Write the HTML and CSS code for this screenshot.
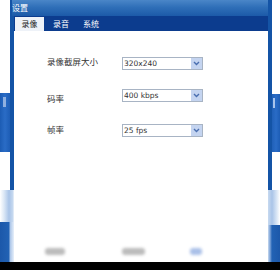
FILE: index.html
```html
<!DOCTYPE html>
<html>
<head>
<meta charset="utf-8">
<link rel="stylesheet" href="styles.css">
</head>
<body>
<div class="screen">
  <div class="main">
    <div class="gutter left">
      <div class="g-top"></div>
      <div class="g-block"><span class="notch"></span></div>
      <div class="g-mid"></div>
      <div class="g-fade"></div>
      <div class="g-dark"></div>
    </div>
    <div class="window">
      <div class="titlebar">设置</div>
      <div class="tabbar">
        <div class="tab active">录像</div>
        <div class="tab">录音</div>
        <div class="tab">系统</div>
      </div>
      <div class="content">
        <div class="rows">
          <div class="row r1">
            <div class="label">录像截屏大小</div>
            <div class="select"><span class="val">320x240</span><span class="arrow"><svg width="7" height="5" viewBox="0 0 7 5"><path d="M1 1 L3.5 3.5 L6 1" fill="none" stroke="#4a6fb0" stroke-width="1.4"/></svg></span></div>
          </div>
          <div class="row r2">
            <div class="label">码率</div>
            <div class="select"><span class="val">400 kbps</span><span class="arrow"><svg width="7" height="5" viewBox="0 0 7 5"><path d="M1 1 L3.5 3.5 L6 1" fill="none" stroke="#4a6fb0" stroke-width="1.4"/></svg></span></div>
          </div>
          <div class="row r3">
            <div class="label">帧率</div>
            <div class="select"><span class="val">25 fps</span><span class="arrow"><svg width="7" height="5" viewBox="0 0 7 5"><path d="M1 1 L3.5 3.5 L6 1" fill="none" stroke="#4a6fb0" stroke-width="1.4"/></svg></span></div>
          </div>
        </div>
        <div class="buttons">
          <div class="blob gray b1"></div>
          <div class="blob gray b2"></div>
          <div class="blob blue b3"></div>
        </div>
      </div>
    </div>
    <div class="gutter right">
      <div class="g-top"></div>
      <div class="g-block"><span class="notch"></span></div>
      <div class="g-mid"></div>
      <div class="g-fade"></div>
      <div class="g-dark"></div>
    </div>
  </div>
  <div class="bottombar"></div>
</div>
</body>
</html>
```

FILE: styles.css
```css
* { box-sizing: border-box; }
html, body { margin: 0; padding: 0; background: #fff; }
body { font-family: "Noto Sans CJK SC", "Liberation Sans", sans-serif; }

.screen { width: 280px; height: 270px; display: flex; flex-direction: column; overflow: hidden; }
.main { flex: 1; display: flex; }
.bottombar { height: 8px; background: #000; }

.gutter { display: flex; flex-direction: column; }
.gutter.left { width: 14px; }
.gutter.right { width: 12px; }

.left .g-top { height: 93px; background: linear-gradient(90deg, #fff 10px, #1454a6 10px); }
.left .g-block { height: 59px; background: linear-gradient(90deg, #1c5cb4 0, #2a6cc6 5px, #1d5db6 10px, #1454a6 10px); position: relative; }
.left .notch { position: absolute; left: 3px; top: 4px; width: 3px; height: 10px; background: #8fb0e0; }
.left .g-mid { height: 38px; background: linear-gradient(90deg, #fff 10px, #1454a6 10px); }
.left .g-fade { height: 32px; background: linear-gradient(90deg, #fff 0, #dce8f6 4px, #a9c4e8 9px, #c8daf0 13px, #f4f8fc 14px); }
.left .g-dark { flex: 1; background: linear-gradient(90deg, #1c58aa 0, #2262b4 9px, #a9c4e8 10px, #e8f0fa 14px); }

.right .g-top { height: 94px; background: linear-gradient(90deg, #1454a6 4px, #fff 4px); }
.right .g-block { height: 58px; background: linear-gradient(90deg, #1454a6 4px, #2060b8 4px, #2a6cc6 8px, #1d5db6 12px); position: relative; }
.right .notch { position: absolute; left: 5px; top: 4px; width: 2px; height: 10px; background: #a8c4ec; }
.right .g-mid { height: 38px; background: linear-gradient(90deg, #1454a6 4px, #fff 4px); }
.right .g-fade { height: 35px; background: linear-gradient(90deg, #c8daf0 0, #a9c4e8 4px, #dce8f6 9px, #fff 12px); }
.right .g-dark { flex: 1; background: linear-gradient(90deg, #c8daf0 0, #7ea4d8 2px, #2262b4 4px, #1c58aa 12px); }

.window { flex: 1; display: flex; flex-direction: column; }
.titlebar {
  height: 16px;
  background: linear-gradient(180deg, #4a86c8 0%, #2f6fb8 45%, #1c5aa8 100%);
  color: #fff; font-size: 8px; line-height: 15px; margin-left: -2px;
}
.tabbar {
  height: 15px; background: #0c3c8e; display: flex; padding-left: 1px; align-items: flex-end;
}
.tab { color: #fff; font-size: 8px; line-height: 13px; height: 14px; width: 30px; text-align: center; }
.tab.active { background: #eef2f8; color: #222; width: 29px; margin-right: 2px; }

.content { flex: 1; display: flex; flex-direction: column; background: #fff; }
.rows { display: flex; flex-direction: column; padding: 26px 0 0 33px; }
.row { display: flex; align-items: center; height: 13px; }
.r2 { margin-top: 19px; }
.r3 { margin-top: 22px; }
.label { width: 75px; font-size: 8.5px; color: #333; }
.r1 .label { position: relative; top: -3px; }
.r2 .label { position: relative; top: 2px; }
.r3 .label { position: relative; top: -2px; }
.select { width: 81px; height: 13px; border: 1px solid #a8b4c4; display: flex; background: #fff; }
.val { flex: 1; font-family: "DejaVu Sans", sans-serif; font-size: 7.5px; line-height: 11px; color: #333; padding-left: 1px; }
.arrow { width: 11px; background: #c4d4f0; display: flex; align-items: center; justify-content: center; }

.buttons { margin-top: auto; height: 22px; display: flex; align-items: center; padding-left: 31px; }
.blob { height: 7px; border-radius: 3px; filter: blur(1.5px); }
.gray { background: #bcbcbc; }
.blue { background: #aac0e8; }
.b1 { width: 20px; }
.b2 { width: 23px; margin-left: 57px; }
.b3 { width: 12px; margin-left: 45px; }
```
